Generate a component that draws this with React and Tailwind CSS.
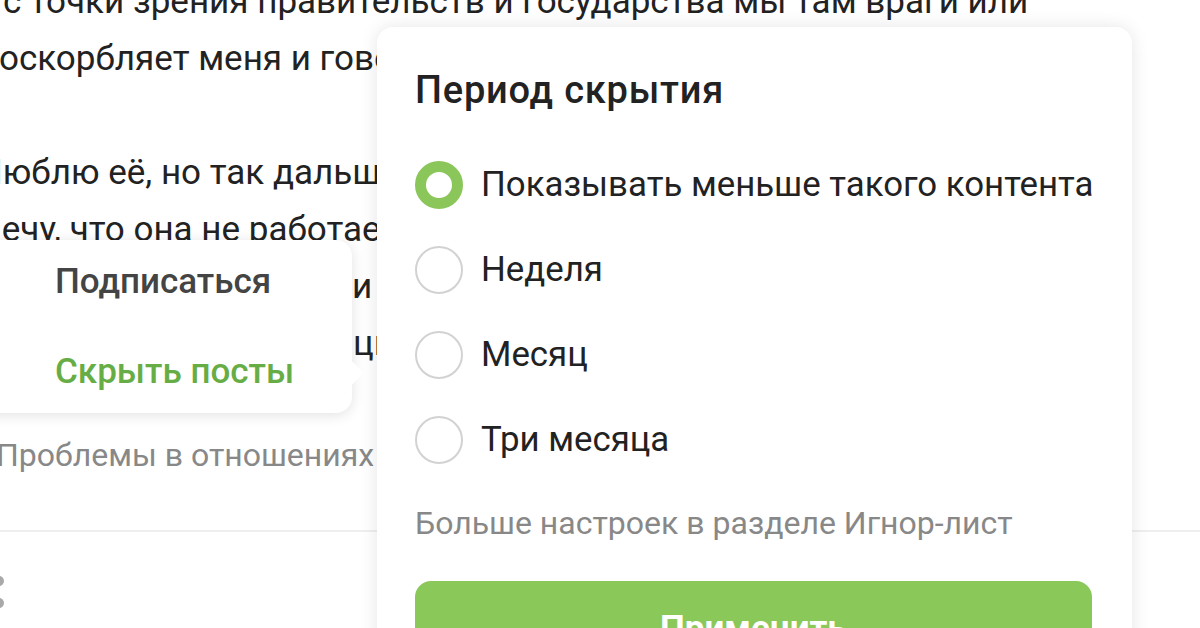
import { useState } from "react";

const FONT = { fontFamily: "Roboto, 'Noto Sans', sans-serif" };

const periods = [
  "Показывать меньше такого контента",
  "Неделя",
  "Месяц",
  "Три месяца",
];

function Radio({ checked }) {
  return checked ? (
    <span className="w-[48px] h-[48px] rounded-full border-[11px] border-[#8bc65a] bg-white shrink-0" />
  ) : (
    <span className="w-[48px] h-[48px] rounded-full border-2 border-[#d2d2d2] bg-white shrink-0" />
  );
}

export default function App() {
  const [period, setPeriod] = useState(0);

  return (
    <div className="w-[1200px] h-[628px] relative overflow-hidden bg-white text-[#222]" style={FONT}>
      {/* Article underneath */}
      <div className="-mt-[27px] text-[35px] leading-[57px] whitespace-nowrap">
        <p className="ml-[3px]">с точки зрения правительств и государства мы там враги или</p>
        <p className="-ml-[1px]">оскорбляет меня и говорит, что я ничего не понимаю</p>
        <p>&nbsp;</p>
        <p className="-ml-[22px]">Люблю её, но так дальше продолжаться не может</p>
        <p className="-ml-[64px]">Замечу, что она не работает над собой и не слушает</p>
        <p className="pl-[352px]">и что мне делать дальше</p>
        <p className="pl-[353px]">ция и непонимание</p>
        <p className="-ml-[4px] mt-[63px] text-[32px] leading-[40px] text-[#888]">Проблемы в отношениях</p>
      </div>
      <div className="mt-[55px] h-[2px] bg-[#eeeff1]" />
      <div className="mt-[44px] -ml-[6px] flex flex-col gap-[12px]">
        <span className="w-[10px] h-[10px] rounded-full bg-[#a9a9a9]" />
        <span className="w-[10px] h-[10px] rounded-full bg-[#a9a9a9]" />
      </div>

      {/* Subscribe menu */}
      <div className="absolute left-[-20px] top-[240px] w-[372px] h-[173px] bg-white rounded-2xl shadow-[0_2px_14px_rgba(0,0,0,0.12)] pl-[75px] flex flex-col justify-center gap-[30px] text-[35px] leading-[60px] font-medium">
        <span className="text-[#444]">Подписаться</span>
        <span className="text-[#67ad45]">Скрыть посты</span>
        <span className="absolute -right-[8px] top-[124px] w-[18px] h-[18px] bg-white rotate-45 rounded-[2px]" />
      </div>

      {/* Hide period sheet */}
      <div className="absolute left-[377px] top-[27px] w-[755px] h-[640px] bg-white rounded-2xl shadow-[0_0_18px_rgba(0,0,0,0.10)] pt-[41px] px-[38px]">
        <h2 className="text-[38px] leading-[44px] font-medium tracking-[0.8px] text-[#222]">Период скрытия</h2>
        <div className="mt-[30px] flex flex-col">
          {periods.map((label, i) => (
            <button
              key={label}
              onClick={() => setPeriod(i)}
              className="h-[85px] flex items-center gap-[18px] text-left text-[34.8px] text-[#222] whitespace-nowrap"
            >
              <Radio checked={period === i} />
              <span>{label}</span>
            </button>
          ))}
        </div>
        <p className="mt-[22px] text-[32px] leading-[38px] text-[#888] whitespace-nowrap">Больше настроек в разделе Игнор-лист</p>
        <button className="mt-[39px] w-[677px] h-[96px] rounded-2xl bg-[#8bc85a] text-white text-[35px] font-bold">
          Применить
        </button>
      </div>
    </div>
  );
}
